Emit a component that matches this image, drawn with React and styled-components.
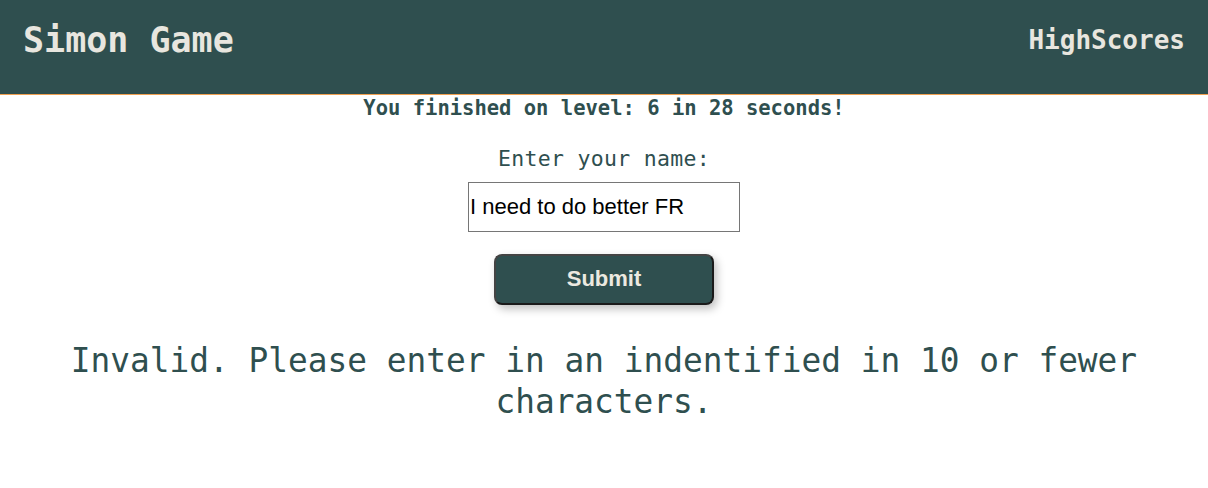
import React from "react";
import styled, { createGlobalStyle } from "styled-components";

const Global = createGlobalStyle`
  body { margin: 0; background: #fff; font-family: "DejaVu Sans Mono", "Liberation Mono", monospace; }
`;

const Header = styled.header`
  height: 80px;
  background: #2f4f4f;
  border-bottom: 1px solid #f0a050;
  display: flex;
  align-items: center;
  justify-content: space-between;
  padding: 0 23px 14px 23px;
  box-sizing: content-box;
`;

const Title = styled.h1`
  margin: 0;
  font-size: 35px;
  font-weight: bold;
  color: #e8e6df;
`;

const NavLink = styled.a`
  font-size: 26px;
  font-weight: bold;
  color: #e8e6df;
  text-decoration: none;
`;

const Main = styled.main`
  display: flex;
  flex-direction: column;
  align-items: center;
  color: #2f4f4f;
`;

const Result = styled.p`
  margin: 1px 0 0;
  font-size: 20.5px;
  line-height: 24px;
  font-weight: bold;
`;

const Label = styled.label`
  margin-top: 26px;
  font-size: 21.5px;
  line-height: 26px;
  letter-spacing: 0.3px;
`;

const Input = styled.input`
  margin-top: 10px;
  width: 272px;
  height: 50px;
  box-sizing: border-box;
  border: 1px solid #767676;
  padding: 0 1px;
  font-family: "Liberation Sans", Arial, sans-serif;
  font-size: 22px;
  color: #000;
  outline: none;
`;

const Button = styled.button`
  margin-top: 22px;
  width: 220px;
  height: 51px;
  background: #2f4f4f;
  border: 2px solid #1a1a1a;
  border-top-color: #444;
  border-left-color: #444;
  border-radius: 8px;
  color: #ece9e0;
  font-family: "Liberation Sans", Arial, sans-serif;
  font-size: 22px;
  font-weight: bold;
  padding: 0 0 2px;
  box-shadow: 3px 4px 8px rgba(0, 0, 0, 0.25);
`;

const Error = styled.p`
  margin: 36px 60px 0;
  text-align: center;
  font-size: 32.8px;
  line-height: 41px;
`;

export default function App() {
  return (
    <>
      <Global />
      <Header>
        <Title>Simon Game</Title>
        <NavLink href="#">HighScores</NavLink>
      </Header>
      <Main>
        <Result>You finished on level: 6 in 28 seconds!</Result>
        <Label htmlFor="name">Enter your name:</Label>
        <Input id="name" defaultValue="I need to do better FR" />
        <Button>Submit</Button>
        <Error>Invalid. Please enter in an indentified in 10 or fewer characters.</Error>
      </Main>
    </>
  );
}
